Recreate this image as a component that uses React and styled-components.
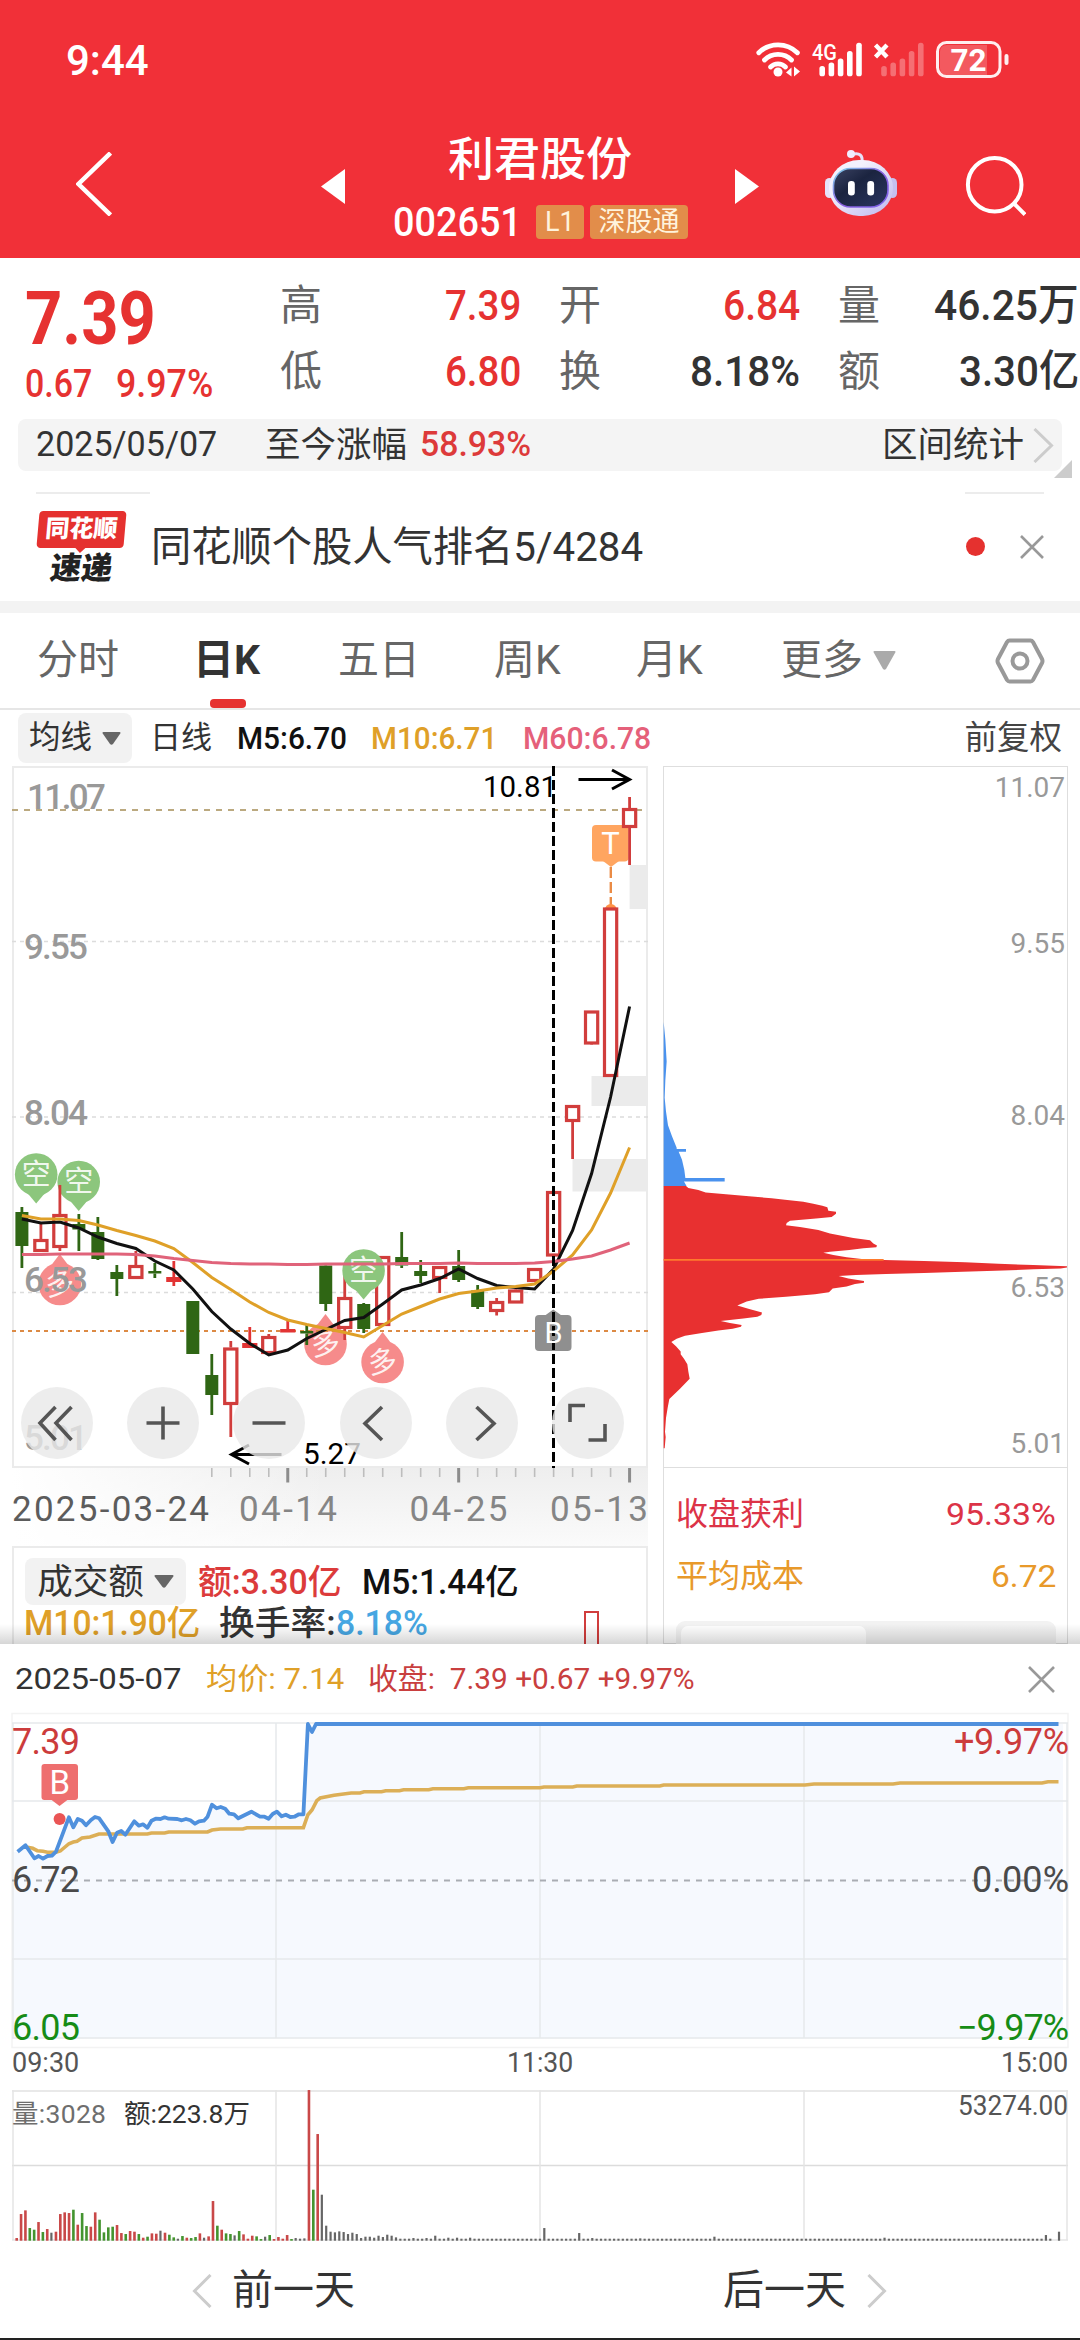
import React, { useLayoutEffect, useRef, useState } from 'react'
import styled, { createGlobalStyle } from 'styled-components'

const RED = '#e63231'
const GOLD = '#dfa028'
const FONT = "Roboto, 'Noto Sans CJK SC', sans-serif"

// squeezes a line of text to a given width, the way the DIN numerals sit in the app
const Fit = ({ w, children, ...rest }) => {
  const ref = useRef(null)
  const [scale, setScale] = useState(1)

  useLayoutEffect(() => {
    setScale(w / ref.current.offsetWidth)
  }, [w, children])

  return (
    <FitBox $w={w} {...rest}>
      <FitText ref={ref} style={{ transform: `scaleX(${scale})` }}>{children}</FitText>
    </FitBox>
  )
}

// ---------- k line data ----------

// [kind, top, bottom, high, low]  kind: g = down, r = up (hollow), f = up (filled)
const candles = [
  ['g', 1212, 1246, 1207, 1268],
  ['r', 1239, 1252, 1223, 1252],
  ['r', 1214, 1248, 1185, 1251],
  ['g', 1224, 1229.5, 1214, 1251],
  ['g', 1232, 1259, 1217, 1260],
  ['g', 1272, 1279, 1265, 1296],
  ['r', 1265, 1279, 1251, 1279],
  ['g', 1271, 1273.5, 1263, 1278],
  ['f', 1277, 1282, 1261, 1286],
  ['g', 1301, 1354, 1301, 1354],
  ['g', 1375, 1395, 1354, 1415],
  ['r', 1347.5, 1405, 1341, 1437],
  ['f', 1343, 1348, 1327, 1348],
  ['r', 1336, 1354, 1334, 1355],
  ['f', 1329, 1332.5, 1320, 1332],
  ['g', 1331, 1333.5, 1325, 1345],
  ['g', 1265.5, 1304, 1265, 1311],
  ['r', 1297, 1329, 1265, 1340],
  ['g', 1304, 1329, 1303, 1333],
  ['r', 1256, 1326, 1256, 1326],
  ['g', 1257, 1265.5, 1232, 1268],
  ['g', 1271, 1276, 1260, 1283],
  ['r', 1266, 1279, 1266, 1293],
  ['g', 1266, 1280, 1250, 1282],
  ['g', 1290.5, 1307, 1285, 1309],
  ['r', 1301, 1312, 1298, 1315.5],
  ['r', 1289.5, 1303.5, 1289, 1303],
  ['r', 1268, 1282, 1268, 1282],
  ['r', 1191, 1256.5, 1191, 1262],
  ['r', 1105, 1122, 1105, 1159],
  ['r', 1010.5, 1044.5, 1011, 1045],
  ['r', 907.5, 1077, 908, 1077],
  ['r', 808, 828, 797, 865],
]

const cx = (i) => 21.9 + i * 18.99

const ma5 = [1219, 1223, 1222, 1228, 1237, 1243.5, 1248.5, 1261, 1270, 1289, 1311.5, 1329, 1343.5, 1355, 1350, 1338.5, 1329.5, 1320.5, 1317.5, 1304, 1290, 1285, 1278.5, 1269, 1278.5, 1285.5, 1287.5, 1289, 1269, 1230.5, 1173.5, 1097, 1006.5]
const ma10 = [1215.5, 1219, 1219, 1220.5, 1225, 1230.5, 1235.5, 1241, 1248.5, 1262.5, 1277.5, 1289.5, 1302, 1312.5, 1320, 1324.5, 1328.5, 1332.5, 1337, 1325.5, 1314, 1306.5, 1299, 1293.5, 1291, 1288, 1286.5, 1284, 1271, 1255, 1230, 1193, 1147.5]
const ma60 = [1254.5, 1254.5, 1254, 1254, 1254, 1254, 1254.5, 1256, 1258.5, 1260.5, 1262.5, 1263.5, 1264, 1264, 1264.5, 1264.5, 1264, 1264, 1264, 1264, 1263.5, 1263.5, 1263.5, 1263, 1263.5, 1263.5, 1263.5, 1263, 1261.5, 1259, 1256, 1250, 1243]

const toPoints = (list) => list.map((y, i) => `${cx(i)},${y}`).join(' ')

const Candle = ({ i, data }) => {
  const [kind, top, bottom, high, low] = data
  const x = cx(i)
  const color = kind === 'g' ? '#2f6614' : kind === 'f' ? '#e23434' : '#d13d3c'
  return (
    <g stroke={color} strokeWidth="2.8">
      {high < top && <line x1={x} x2={x} y1={high} y2={top} />}
      {low > bottom && <line x1={x} x2={x} y1={bottom} y2={low} />}
      {kind === 'r'
        ? <rect x={x - 6.1} y={top + 1.5} width="12.2" height={bottom - top - 3} fill="#fff" strokeWidth="3.2" />
        : <rect x={x - (kind === 'f' ? 7.6 : 6.5)} y={top} width={kind === 'f' ? 15.2 : 13} height={bottom - top} fill={color} stroke="none" />}
    </g>
  )
}

const Bubble = ({ x, y, up }) => (
  <g>
    <g fill={up ? '#f68b8b' : '#8cc67d'}>
      <circle cx={x} cy={y} r="21.3" />
      <path d={up ? `M${x - 8} ${y - 19.6} L${x} ${y - 30} L${x + 8} ${y - 19.6}z` : `M${x - 8} ${y + 19.6} L${x} ${y + 29} L${x + 8} ${y + 19.6}z`} />
    </g>
    <text x={x} y={y + 10} fontSize="29" textAnchor="middle" fill="#fff" fillOpacity=".9" transform={up ? `rotate(-8 ${x} ${y})` : undefined}>{up ? '多' : '空'}</text>
  </g>
)

const KChart = () => (
  <KSvg viewBox="12 766 636 780">
    <defs>
      <linearGradient id="axisShade" x1="0" x2="0" y1="0" y2="1">
        <stop offset="0" stopColor="#eeeeee" />
        <stop offset="1" stopColor="#fbfbfb" />
      </linearGradient>
      <linearGradient id="axisFade" x1="0" x2="1" y1="0" y2="0">
        <stop offset="0" stopColor="#fff" />
        <stop offset=".5" stopColor="#fff" stopOpacity="0" />
      </linearGradient>
    </defs>
    <rect x="12" y="1468" width="636" height="80" fill="url(#axisShade)" />
    <rect x="12" y="1468" width="636" height="80" fill="url(#axisFade)" />
    <rect x="13" y="767" width="634" height="700" fill="#fff" stroke="#ebebeb" strokeWidth="2" />

    <g fill="#ebebeb">
      <rect x="629.6" y="865" width="18" height="44" />
      <rect x="591.5" y="1076" width="56" height="30" />
      <rect x="572.5" y="1159" width="75" height="32.5" />
    </g>

    <g stroke="#dcdcdc" strokeWidth="1.6" strokeDasharray="4 4">
      <line x1="12" x2="648" y1="941.5" y2="941.5" />
      <line x1="12" x2="648" y1="1117" y2="1117" />
      <line x1="12" x2="648" y1="1292.5" y2="1292.5" />
    </g>

    <Bubble x={59.8} y={1284} up />
    <Bubble x={325.5} y={1344} up />
    <Bubble x={382.6} y={1362} up />
    <Bubble x={36.2} y={1174.5} />
    <Bubble x={78.7} y={1182} />

    <g fill="#999" fontSize="35" fontWeight="500">
      <text x="27" y="809" textLength="79">11.07</text>
      <text x="24" y="959" textLength="64">9.55</text>
      <text x="24" y="1125" textLength="64">8.04</text>
      <text x="24" y="1292" textLength="64">6.53</text>
      <text x="24" y="1450" textLength="64">5.01</text>
    </g>
    <line x1="12" x2="642" y1="810" y2="810" stroke="#bba97f" strokeWidth="2" strokeDasharray="6 6" />
    <line x1="12" x2="648" y1="1331" y2="1331" stroke="#dc8a45" strokeWidth="2.2" strokeDasharray="4 4" />

    <rect x="592" y="825" width="36.5" height="36.5" rx="4" fill="#ffa560" />
    <path d="M603 861h16l-8 6z" fill="#ffa560" />
    <text x="610.5" y="854" fontSize="31" textAnchor="middle" fill="#fff">T</text>
    <line x1="610.8" x2="610.8" y1="867" y2="906" stroke="#ea8b45" strokeWidth="2.4" strokeDasharray="11 4" />
    <circle cx="610.8" cy="910" r="6" fill="#ff9347" />

    {candles.map((c, i) => <Candle key={i} i={i} data={c} />)}
    <Bubble x={363.6} y={1270.5} />

    <g fill="none" strokeWidth="3">
      <polyline points={toPoints(ma5)} stroke="#111" />
      <polyline points={toPoints(ma10)} stroke={GOLD} />
      <polyline points={toPoints(ma60)} stroke="#e0637a" />
    </g>

    <rect x="535" y="1315" width="36.5" height="36" rx="4" fill="#8f8f8f" />
    <path d="M545 1315.5l8.3-6 8.3 6z" fill="#8f8f8f" />
    <line x1="553.5" x2="553.5" y1="766" y2="1468" stroke="#000" strokeWidth="3" strokeDasharray="10 4" />
    <text x="553.5" y="1343" fontSize="29" textAnchor="middle" fill="#fff">B</text>

    <g fill="#000" fontSize="30">
      <text x="483" y="796.5" textLength="74" lengthAdjust="spacingAndGlyphs">10.81</text>
      <text x="303" y="1464" textLength="58" lengthAdjust="spacingAndGlyphs">5.27</text>
    </g>
    <g fill="none" stroke="#000" strokeWidth="3">
      <path d="M578.5 779.5h50M612 770l17.5 9.5-17.5 9.5" />
      <path d="M281.5 1454.5h-50M249 1445l-17.5 9.5 17.5 9.5" />
    </g>

    {candles.map((c, i) => {
      if (i < 10) return null
      const big = i === 14 || i === 23 || i === 32
      return <line key={i} x1={cx(i)} x2={cx(i)} y1="1468" y2={big ? 1482.5 : 1477} stroke={big ? '#8c8c8c' : '#bdbdbd'} strokeWidth={big ? 3 : 1.6} />
    })}
    <g fontSize="35" fill="#858585">
      <text x="12" y="1521" textLength="197" fill="#5c5c5c">2025-03-24</text>
      <text x="239" y="1521" textLength="98">04-14</text>
      <text x="409.5" y="1521" textLength="98">04-25</text>
      <text x="550" y="1521" textLength="98">05-13</text>
    </g>
  </KSvg>
)

const ChipChart = () => (
  <ChipSvg viewBox="663 766 405 701">
    <g transform="translate(640 960) scale(.33333 .34436)">
      <path
        d="M71 180 L76 230 80 295 76 350 74 400 78 440 84 480 96 512 110 545 110 549 138 549 138 557 116 557 126 580 133 610 136 633 254 633 254 643 132 643 140 657 71 657z"
        fill="#4a92ee"
      />
      <path
        d="M71 656 L138 656 145 662 175 668 197 675 258 680 327 686 395 692 435 696 490 702 520 708 547 714 562 718 565 728 588 731 588 737 575 746 528 751 450 757 440 764 438 770 480 775 535 784 570 794 605 801 640 807 690 814 700 823 711 829 709 834 670 837 628 842 570 847 550 850 580 857 620 863 665 868 731 871 852 874 975 878 1075 882 1180 886 1281 889 1281 893 1262 896 1180 898 1090 902 968 905 852 909 738 912 648 915 596 918 625 925 672 932 672 937 645 941 620 948 578 954 567 965 525 971 438 978 356 984 320 992 292 1003 325 1013 366 1024 364 1031 352 1036 310 1041 242 1048 270 1054 305 1060 303 1065 278 1071 235 1076 186 1083 135 1091 110 1100 94 1109 108 1122 122 1137 122 1145 132 1158 142 1174 145 1195 149 1216 120 1245 88 1275 83 1300 78 1330 75 1370 77 1385 74 1418 71 1418z"
        fill="#e83030"
      />
      <line x1="71" x2="731" y1="871" y2="871" stroke="#ff7a2c" strokeWidth="5" />
    </g>
    <g fill="#999" fontSize="28" textAnchor="end">
      <text x="1065" y="797">11.07</text>
      <text x="1065" y="953">9.55</text>
      <text x="1065" y="1125">8.04</text>
      <text x="1065" y="1297">6.53</text>
      <text x="1065" y="1453">5.01</text>
    </g>
  </ChipSvg>
)

// ---------- one day data ----------

const price = '17.6,1851.7 25.5,1845.3 34.4,1858.3 38.6,1856 43,1858.7 47.5,1856 52,1855.7 56,1851.7 68.9,1817.3 73.3,1827.3 77.8,1819 82,1820.7 86,1825.3 91,1820 95,1817 99.2,1818.3 108.5,1831.7 112.6,1842 117,1832.7 121.2,1831 125.3,1834.7 134.3,1821.3 138.8,1825.7 143,1824.3 147.4,1827.7 151.5,1820.7 155.7,1818.7 160.5,1819 164.6,1817.3 168.7,1818.7 177.3,1819 181.8,1820.3 186,1819 190.4,1820.3 195,1823.7 199,1821.3 203.9,1820.7 207.6,1816.7 212,1804.7 216.6,1808.3 220.7,1807 225.2,1808.7 229.3,1813.7 234,1814.3 238.3,1818.3 251.4,1811.7 260,1816.7 264.5,1816.7 268.6,1818.7 272.7,1814 276.9,1811.7 281.7,1816.3 285.8,1814.7 290.3,1817 294.4,1816.7 298.9,1814.3 303.4,1814.3 307.9,1724 312,1732 316,1724 1058.5,1724'
const average = '27.5,1847.3 32.7,1848.3 37.2,1850.7 43,1851.3 47.5,1852.3 56,1852.3 60.3,1851 68.9,1843.7 73.3,1842 77,1841.3 82,1838 90,1837 99,1834 147.4,1834 151.5,1833 164.6,1833 168.7,1832 207.6,1832 212,1830 220.4,1829 242.8,1829 247,1827.7 303.4,1827.7 307.9,1814.7 312,1810 316.8,1800.7 320.2,1798 334,1795.3 351.2,1793 360,1793 364,1791.7 381.5,1791.7 385.7,1790.7 399.5,1790.7 403.6,1789.7 428.7,1789.7 432.9,1788.7 463.8,1788.7 468.3,1787.7 540,1787.7 544,1787 572.7,1787 576.8,1786 659.8,1786 663.6,1785 805,1785 814,1784 893,1784 900,1783 1042,1783 1048,1781.7 1058.5,1781.7'

const volumes = (
  'r8 r80 r91 g38 g33 r56 g26 r35 k24 r27 r80 r85 r83 g93 r48 g83 g44 r42 r85 g63 g25 g40 g42 r47 r23 g20 r29 r27 g20 r9 ' +
  'g12 r22 r21 k30 r24 g18 g10 k6 g14 r9 g8 g11 r22 k9 r13 r119 g45 r33 g22 g20 k16 g29 r19 r6 r15 g13 g5 k12 g17 r5 ' +
  'r11 r6 r17 g5 k8 k6 k7 r452 g153 r320 k138 k45 k27 k25 k28 k26 k20 k24 k20 k8 k12 k12 k9 k15 k11 k18 k15 k10'
).split(' ').map((s) => [s[0], Number(s.slice(1))])
const spikes = { 91: 8, 94: 8, 96: 15, 99: 9, 101: 9, 104: 9, 121: 38, 129: 23, 132: 8, 143: 7, 160: 12, 199: 9, 236: 17, 238: 0, 239: 27 }
for (let i = volumes.length; i < 240; i++) volumes.push(['k', spikes[i] ?? 6])
const barColor = { r: '#c94848', g: '#44942f', k: '#666' }

const DayChart = () => (
  <DaySvg viewBox="0 1712 1080 338">
    <rect x="12" y="1713.5" width="1056" height="334" fill="none" stroke="#f3f3f3" strokeWidth="1.5" />
    <polygon points={`13,2038 13,1852 ${price} 1063,1724 1063,2038`} fill="#f6f9fe" />
    <g stroke="#e6e8eb" strokeWidth="1.5">
      <line x1="12" x2="1068" y1="1723" y2="1723" />
      <line x1="12" x2="1068" y1="1801" y2="1801" />
      <line x1="12" x2="1068" y1="1959" y2="1959" />
      <line x1="12" x2="1068" y1="2038" y2="2038" />
      <line x1="13" x2="13" y1="1723" y2="2038" />
      <line x1="276" x2="276" y1="1723" y2="2038" />
      <line x1="540" x2="540" y1="1723" y2="2038" />
      <line x1="804" x2="804" y1="1723" y2="2038" />
      <line x1="1067" x2="1067" y1="1723" y2="2038" />
    </g>
    <line x1="12" x2="1063" y1="1880.5" y2="1880.5" stroke="#a9adb3" strokeWidth="2" strokeDasharray="6 6" />
    <polyline points={average} fill="none" stroke="#dcaf57" strokeWidth="3.6" />
    <polyline points={price} fill="none" stroke="#4f90dd" strokeWidth="3.8" strokeLinejoin="round" />
    <g fontSize="36">
      <text x="12" y="1754" textLength="68" fill="#cc3c3c">7.39</text>
      <text x="12" y="1892" textLength="68" fill="#4a4a4a">6.72</text>
      <text x="12" y="2040" textLength="68" fill="#168c16">6.05</text>
      <g textAnchor="end">
        <text x="1069" y="1754" textLength="115" fill="#cc3c3c">+9.97%</text>
        <text x="1069" y="1892" textLength="97" fill="#4a4a4a">0.00%</text>
        <text x="1069" y="2040" textLength="112" fill="#168c16">−9.97%</text>
      </g>
    </g>
    <rect x="41.5" y="1764" width="36.5" height="36" rx="3" fill="#ee6f6f" />
    <path d="M51 1799.5h17l-8.5 6.5z" fill="#ee6f6f" />
    <text x="59.8" y="1793.5" fontSize="33" textAnchor="middle" fill="#fff">B</text>
    <circle cx="59.6" cy="1819" r="6" fill="#ea5555" />
  </DaySvg>
)

const VolumeChart = () => (
  <VolumeSvg viewBox="0 2076 1080 170">
    <g stroke="#e4e4e4" strokeWidth="1.5" fill="none">
      <line x1="12" x2="1068" y1="2091" y2="2091" stroke="#e9e9e9" strokeWidth="2" />
      <line x1="12" x2="1068" y1="2165.5" y2="2165.5" stroke="#dcdcdc" />
      <line x1="12" x2="1068" y1="2240" y2="2240" />
      <line x1="13" x2="13" y1="2090" y2="2240" />
      <line x1="276" x2="276" y1="2090" y2="2240" />
      <line x1="540" x2="540" y1="2090" y2="2240" />
      <line x1="804" x2="804" y1="2090" y2="2240" />
      <line x1="1067" x2="1067" y1="2090" y2="2240" />
    </g>
    {volumes.map(([k, h], i) => (
      <rect key={i} x={15.4 + i * 4.362} y={2240.7 - h / 3} width={k === 'k' ? 2.2 : 2.6} height={h / 3} fill={barColor[k]} />
    ))}
    <g fontSize="26.5">
      <text x="12" y="2123" textLength="94" fill="#6e6e6e">量:3028</text>
      <text x="124" y="2123" textLength="126" fill="#333">额:223.8万</text>
      <text x="958" y="2115" textLength="110" fill="#555" fontSize="28" lengthAdjust="spacingAndGlyphs">53274.00</text>
    </g>
  </VolumeSvg>
)

// ---------- icons ----------

const signal = [[819.4, 66], [828.6, 62.5], [837.8, 58.5], [847, 51], [856.2, 42.7]]

const StatusIcons = () => (
  <svg width="256" height="40" viewBox="754 40 256 40" fill="none">
    <g stroke="#fff" strokeWidth="4.8" strokeLinecap="round">
      <path d="M758.8 52.7a27.500 27.500 0 0 1 38.600 0" />
      <path d="M764.500 60a19 19 0 0 1 27 0" />
      <path d="M770.500 67a10.500 10.500 0 0 1 15 0" />
    </g>
    <circle cx="778" cy="72" r="4.500" fill="#fff" />
    <path d="M786 72.500l5.500-5v9zM800 71.500l-6-5v10z" fill="#fff" />
    <text x="812" y="60" fontSize="22.500" fontWeight="500" fill="#fff" textLength="25" lengthAdjust="spacingAndGlyphs">4G</text>
    <g fill="#fff">
      {signal.map(([x, y]) => <rect key={x} x={x} y={y} width="5.600" height={76.300 - y} rx="2.600" />)}
    </g>
    <g fill="#fff" opacity=".3" transform="translate(61.800 0)">
      {signal.map(([x, y]) => <rect key={x} x={x} y={y} width="5.600" height={76.300 - y} rx="2.600" />)}
    </g>
    <path d="M875.500 45l11.500 12M887 45l-11.500 12" stroke="#fff" strokeWidth="4.400" />
    <path d="M947 45h40v30h-40q-7 0-7-7v-16q0-7 7-7z" fill="#fff" opacity=".2" />
    <rect x="937.500" y="42.500" width="62.500" height="34" rx="9" stroke="#fff" strokeOpacity=".92" strokeWidth="3" />
    <rect x="1004.500" y="54" width="4" height="11" rx="2" fill="#fff" fillOpacity=".92" />
    <text x="968.500" y="71" fontSize="31.500" fontWeight="700" fill="#fff" textAnchor="middle">72</text>
  </svg>
)

const Robot = () => (
  <svg width="72" height="68" viewBox="825 149 72 68">
    <defs>
      <linearGradient id="shell" x1="0" x2="1" y1="0" y2="1">
        <stop offset=".3" stopColor="#f3f1fd" />
        <stop offset="1" stopColor="#bdb6ee" />
      </linearGradient>
      <linearGradient id="visor" x1="0" x2="1" y1="0" y2="1">
        <stop offset="0" stopColor="#3b4363" />
        <stop offset=".4" stopColor="#1b2440" />
        <stop offset="1" stopColor="#2b3660" />
      </linearGradient>
      <linearGradient id="rim" x1="0" x2="1" y1="0" y2="1">
        <stop offset="0" stopColor="#7fd6ea" />
        <stop offset=".5" stopColor="#8a5fe0" />
        <stop offset="1" stopColor="#7d62e8" />
      </linearGradient>
    </defs>
    <path d="M862 162c1-7-3-9-8-8" stroke="#e6e2fa" strokeWidth="3" fill="none" />
    <circle cx="851" cy="154" r="4" fill="#f1edff" />
    <rect x="825" y="178" width="9" height="20" rx="4.500" fill="#e6e2fa" />
    <rect x="888" y="178" width="9" height="20" rx="4.500" fill="#c5bff0" />
    <rect x="829" y="160" width="64" height="56" rx="30" fill="url(#shell)" />
    <rect x="833.500" y="168.500" width="54.500" height="38.500" rx="17" fill="url(#visor)" stroke="url(#rim)" strokeWidth="1.600" />
    <rect x="848" y="181" width="6.800" height="14.500" rx="3.200" fill="#fff" />
    <rect x="867.300" y="181" width="6.800" height="14.500" rx="3.200" fill="#fff" />
  </svg>
)

const Chevron = ({ left, w = 20, h = 34, color = '#ccc', sw = 3 }) => (
  <svg width={w} height={h} fill="none" stroke={color} strokeWidth={sw}>
    <path d={left ? `M${w - 1.5} 1 L2.5 ${h / 2} L${w - 1.5} ${h - 1}` : `M1.5 1 L${w - 2.5} ${h / 2} L1.5 ${h - 1}`} />
  </svg>
)

const Cross = ({ size, sw = 2.6 }) => (
  <svg width={size} height={size} stroke="#999" strokeWidth={sw}>
    <path d={`M1 1L${size - 1} ${size - 1}M${size - 1} 1L1 ${size - 1}`} />
  </svg>
)

const Down = ({ w, h, color = '#666' }) => (
  <svg width={w} height={h}>
    <path d={`M1.5 0h${w - 3}q1.5 0 .8 1.5L${w / 2 + 1.5} ${h - 1}q-1.5 1.5-3 0L.7 1.5Q0 0 1.5 0z`} fill={color} />
  </svg>
)

const toolIcons = [
  'M34.5 20L19 36l15.5 17M50.5 20L35 36l15.5 17',
  'M19.5 36h33M36 19.5v33',
  'M19.5 36h33',
  'M42 20L25 36.5 42 53',
  'M30.5 20l17.5 16.5L30.5 53',
  'M33 18.5H18v16.5M36.5 53H53V37',
]

const quotes = [
  ['高', '7.39', 76, RED],
  ['开', '6.84', 77, RED],
  ['量', '46.25万', 145, '#333'],
  ['低', '6.80', 76, RED],
  ['换', '8.18%', 110, '#333'],
  ['额', '3.30亿', 120, '#333'],
]

const App = () => {
  return (
    <Page>
      <Global />
      <Header>
        <Status>
          <Fit w={83}>9:44</Fit>
          <StatusIcons />
        </Status>
        <Nav>
          <Back>
            <Chevron left w={36} h={64} color="#fff" sw={4.5} />
          </Back>
          <svg width="24" height="35"><path d="M24 0v35L0 17.5z" fill="#fff" /></svg>
          <Title>
            <Name>利君股份</Name>
            <Code>
              <Fit w={129}>002651</Fit>
              <Badge $w={48} $ml={14}><Fit w={30}>L1</Fit></Badge>
              <Badge $w={98} $ml={6}>深股通</Badge>
            </Code>
          </Title>
          <svg width="24" height="35"><path d="M0 0v35l24-17.5z" fill="#fff" /></svg>
          <RobotBox><Robot /></RobotBox>
          <svg width="62" height="62" fill="none" stroke="#fff" strokeWidth="4">
            <circle cx="30.7" cy="29.7" r="26.8" />
            <path d="M50 48.500l11 11" />
          </svg>
        </Nav>
      </Header>

      <Quote>
        <Now>
          <Big><Fit w={131}>7.39</Fit></Big>
          <Change>
            <Fit w={67}>0.67</Fit>
            <Fit w={97}>9.97%</Fit>
          </Change>
        </Now>
        <Metrics>
          {quotes.map(([label, value, w, color]) => (
            <Metric key={label} $color={color}>
              <span>{label}</span>
              <Fit w={w}>{value}</Fit>
            </Metric>
          ))}
        </Metrics>
      </Quote>

      <Strip>
        <Fit w={181}>2025/05/07</Fit>
        <StripLabel>至今涨幅</StripLabel>
        <StripRate><Fit w={111}>58.93%</Fit></StripRate>
        <StripLink>区间统计</StripLink>
        <Chevron w={21} h={35} color="#ccc" />
        <Corner />
      </Strip>

      <News>
        <Rules><i /><i /></Rules>
        <Logo>
          <LogoTop>同花顺</LogoTop>
          <LogoBottom>速递</LogoBottom>
        </Logo>
        <NewsText><Fit w={492}>同花顺个股人气排名5/4284</Fit></NewsText>
        <Dot />
        <Cross size={24} />
      </News>

      <Tabs>
        <Tab $w={156}>分时</Tab>
        <Tab $w={145} $on>日K</Tab>
        <Tab $w={156}>五日</Tab>
        <Tab $w={142}>周K</Tab>
        <Tab $w={145}>月K</Tab>
        <Tab $w={214}>更多<Down w={23} h={19} color="#aaa" /></Tab>
        <svg width="50" height="46" viewBox="0 0 50 46" fill="none" stroke="#999" strokeWidth="4">
          <path d="M14.5 2.500h21q1.500 0 2.500 1.500l9 17q1 2 0 4l-9 17q-1 1.500-2.500 1.500h-21q-1.500 0-2.500-1.500l-9-17q-1-2 0-4l9-17q1-1.500 2.500-1.500z" />
          <circle cx="25" cy="23" r="7.5" />
        </svg>
      </Tabs>

      <MaBar>
        <Pill $w={114} $h={50} $size={31.5}>均线<Down w={19} h={13} /></Pill>
        <MaItem $ml={18}>日线</MaItem>
        <MaItem $ml={25} $color="#111" $strong><Fit w={110}>M5:6.70</Fit></MaItem>
        <MaItem $ml={24} $color={GOLD} $strong><Fit w={126}>M10:6.71</Fit></MaItem>
        <MaItem $ml={26} $color="#e5607a" $strong><Fit w={128}>M60:6.78</Fit></MaItem>
        <Adjust>前复权</Adjust>
      </MaBar>

      <Charts>
        <Left>
          <KChart />
          <Tools>
            {toolIcons.map((d) => (
              <Tool key={d}>
                <svg width="72" height="72" fill="none" stroke="#555" strokeWidth="3.6"><path d={d} /></svg>
              </Tool>
            ))}
          </Tools>
          <Turnover>
            <TurnoverRow>
              <Pill $w={161} $h={47} $size={35.5}>成交额<Down w={20} h={13} /></Pill>
              <Figure $ml={12} $color="#dc3b3b"><Fit w={144}>额:3.30亿</Fit></Figure>
              <Figure $ml={20} $color="#111"><Fit w={157}>M5:1.44亿</Fit></Figure>
            </TurnoverRow>
            <TurnoverRow $second>
              <Figure $ml={-1} $color={GOLD}><Fit w={176}>M10:1.90亿</Fit></Figure>
              <Figure $ml={19} $color="#333"><Fit w={117}>换手率:</Fit></Figure>
              <Figure $color="#46a6e2"><Fit w={92}>8.18%</Fit></Figure>
              <TurnoverBar />
            </TurnoverRow>
          </Turnover>
        </Left>
        <Right>
          <ChipChart />
          <ChipRow $color="#dc3347"><span>收盘获利</span><Fit w={110}>95.33%</Fit></ChipRow>
          <ChipRow $color="#e8992a"><span>平均成本</span><Fit w={65}>6.72</Fit></ChipRow>
          <Segment>
            <SegmentOn />
          </Segment>
        </Right>
        <Shade />
      </Charts>

      <Sheet>
        <SheetHead>
          <Fit w={166}>2025-05-07</Fit>
          <HeadItem $ml={25} $color={GOLD}><Fit w={138}>均价: 7.14</Fit></HeadItem>
          <HeadItem $ml={24} $color="#c93f3f"><Fit w={327}>收盘:&nbsp; 7.39 +0.67 +9.97%</Fit></HeadItem>
          <Close><Cross size={27} /></Close>
        </SheetHead>
        <DayChart />
        <Times>
          <Fit w={67}>09:30</Fit>
          <Fit w={66}>11:30</Fit>
          <Fit w={67}>15:00</Fit>
        </Times>
        <VolumeChart />
        <Pager>
          <Chevron left w={20} h={34} />
          <PagerText $ml={20} $mr={368}>前一天</PagerText>
          <PagerText $mr={21}>后一天</PagerText>
          <Chevron w={20} h={34} />
        </Pager>
      </Sheet>
    </Page>
  )
}

export default App

const Global = createGlobalStyle`
body {
  margin: 0;
  background: #fff;
}
* {
  box-sizing: border-box;
}
svg {
  display: block;
  flex: none;
}
svg text {
  font-family: ${FONT};
}
`

const Page = styled.div`
width: 1080px;
height: 2340px;
overflow: hidden;
background: #fff;
font-family: ${FONT};
line-height: 1.2;
color: #333;
`

const FitBox = styled.span`
display: block;
flex: none;
width: ${(p) => p.$w}px;
white-space: nowrap;
`

const FitText = styled.span`
display: inline-block;
transform-origin: 0 50%;
`

const Header = styled.div`
height: 258px;
background: #f13038;
color: #fff;
`

const Status = styled.div`
display: flex;
justify-content: space-between;
align-items: center;
height: 120px;
padding: 0 70px 0 66px;
font-size: 43px;
font-weight: 500;
line-height: 50px;
`

const Nav = styled.div`
display: flex;
align-items: center;
height: 132px;
`

const Back = styled.div`
width: 321px;
padding: 0 0 5px 76px;
`

const Title = styled.div`
width: 390px;
height: 132px;
padding-top: 11px;
`

const Name = styled.div`
font-size: 46px;
line-height: 56px;
font-weight: 500;
text-align: center;
`

const Code = styled.div`
display: flex;
align-items: center;
height: 34px;
margin-top: 18px;
padding-left: 48px;
font-size: 41px;
font-weight: 500;
line-height: 34px;
`

const Badge = styled.div`
display: flex;
justify-content: center;
width: ${(p) => p.$w}px;
height: 34px;
margin-left: ${(p) => p.$ml}px;
border-radius: 4px;
background: #e28d4a;
color: #fff3dc;
font-size: 27px;
font-weight: 400;
`

const RobotBox = styled.div`
margin: 0 67px 6px 66px;
`

const Quote = styled.div`
display: flex;
height: 161px;
padding-top: 15px;
`

const Now = styled.div`
width: 281px;
padding: 10px 0 0 25px;
color: ${RED};
`

const Big = styled.div`
font-size: 74px;
font-weight: 700;
line-height: 72px;
`

const Change = styled.div`
display: flex;
gap: 24px;
margin-top: 4px;
font-size: 38px;
font-weight: 500;
line-height: 50px;
`

const Metrics = styled.div`
display: grid;
grid-template-columns: repeat(3, 240px);
grid-auto-rows: 66px;
column-gap: 39px;
`

const Metric = styled.div`
display: flex;
justify-content: space-between;
align-items: center;
font-size: 43px;
font-weight: 500;
color: ${(p) => p.$color};

> span:first-child {
  margin-left: -1px;
  font-size: 42px;
  font-weight: 400;
  color: #666;
}
`

const Strip = styled.div`
position: relative;
display: flex;
align-items: center;
height: 52px;
margin: 0 18px;
padding: 0 8px 0 18px;
border-radius: 8px;
background: #f4f4f4;
font-size: 35px;
line-height: 50px;
`

const StripLabel = styled.div`
margin-left: 48px;
font-size: 35.5px;
`

const StripRate = styled.div`
margin-left: 13px;
font-weight: 500;
color: #dd3a3a;
`

const StripLink = styled.div`
margin: 0 9px 0 auto;
font-size: 35.5px;
`

const Corner = styled.div`
position: absolute;
right: -10px;
bottom: -7px;
border-left: 18px solid transparent;
border-bottom: 18px solid #ccc;
`

const News = styled.div`
display: grid;
grid-template-columns: 112px 816px 54px 30px;
grid-template-rows: 34px 1fr;
align-items: center;
height: 130px;
padding-left: 38px;
`

const Rules = styled.div`
grid-column: 1 / -1;
display: flex;
justify-content: space-between;
align-self: start;
padding: 21px 6px 0 0;
margin-left: -2px;

i {
  width: 114px;
  height: 2px;
  background: #ececec;
}
i:last-child {
  width: 79px;
}
`

const Logo = styled.div`
align-self: start;
width: 87px;
padding-top: 6px;
text-align: center;
font-weight: 900;
`

const LogoTop = styled.div`
height: 37px;
border-radius: 4px;
background: #e5312f;
color: #fff;
font-size: 24px;
line-height: 37px;
transform: skewX(-5deg);

&::after {
  content: '';
  display: block;
  width: 0;
  margin: -1px auto 0;
  border: 6px solid transparent;
  border-top-color: #e5312f;
}
`

const LogoBottom = styled.div`
margin-top: 3px;
color: #222;
font-size: 31px;
line-height: 35px;
transform: skewX(-8deg);
`

const NewsText = styled.div`
margin: 0 0 13px 1px;
font-size: 41px;
line-height: 50px;
`

const Dot = styled.div`
width: 19px;
height: 19px;
margin-bottom: 13px;
border-radius: 50%;
background: #e5312f;

& + svg {
  margin: 0 0 13px;
}
`

const Tabs = styled.div`
display: flex;
align-items: center;
height: 109px;
padding-left: 37px;
border-top: 12px solid #f3f3f3;
border-bottom: 2px solid #e6e6e6;
`

const Tab = styled.div`
position: relative;
display: flex;
align-items: center;
gap: 10px;
width: ${(p) => p.$w}px;
height: 95px;
font-size: 41px;
font-weight: ${(p) => (p.$on ? 700 : 400)};
color: ${(p) => (p.$on ? '#333' : '#666')};

&::after {
  content: '';
  display: ${(p) => (p.$on ? 'block' : 'none')};
  position: absolute;
  left: 17px;
  bottom: 0;
  width: 36px;
  height: 9px;
  border-radius: 4px;
  background: ${RED};
}
`

const MaBar = styled.div`
display: flex;
align-items: center;
height: 56px;
padding: 0 18px;
line-height: 46px;
`

const Pill = styled.div`
display: flex;
align-items: center;
justify-content: center;
gap: 10px;
width: ${(p) => p.$w}px;
height: ${(p) => p.$h}px;
border-radius: 8px;
background: #f2f2f2;
font-size: ${(p) => p.$size}px;
`

const MaItem = styled.div`
margin-left: ${(p) => p.$ml}px;
font-size: ${(p) => (p.$strong ? 32 : 31)}px;
font-weight: ${(p) => (p.$strong ? 500 : 400)};
color: ${(p) => p.$color || '#333'};
`

const Adjust = styled.div`
margin-left: auto;
font-size: 32.5px;
color: #444;
`

const Charts = styled.div`
position: relative;
display: flex;
gap: 15px;
height: 878px;
padding-left: 12px;
overflow: hidden;
`

const Left = styled.div`
position: relative;
width: 636px;
`

const KSvg = styled.svg`
width: 636px;
height: 780px;
`

const Tools = styled.div`
position: absolute;
top: 621px;
left: 9px;
display: flex;
gap: 34.2px;
`

const Tool = styled.div`
width: 72px;
height: 72px;
border-radius: 50%;
background: rgba(232, 232, 232, 0.8);
`

const Turnover = styled.div`
height: 120px;
padding: 10px 11px;
border: 2px solid #ebebeb;
border-bottom: 0;
background: #fff;
`

const TurnoverRow = styled.div`
display: flex;
align-items: center;
height: ${(p) => (p.$second ? 36 : 47)}px;
line-height: 44px;
`

const Figure = styled.div`
margin-left: ${(p) => p.$ml || 0}px;
font-size: 34.5px;
font-weight: 500;
color: ${(p) => p.$color};
`

const TurnoverBar = styled.div`
align-self: flex-start;
width: 15px;
height: 60px;
margin: 6px 0 0 156px;
border: 2.5px solid #d13d3c;
`

const Right = styled.div`
width: 405px;
border: 1.5px solid #dedede;
`

const ChipSvg = styled.svg`
box-sizing: content-box;
width: 405px;
height: 701px;
margin: -1px 0 0 -1px;
border-bottom: 1.5px solid #dedede;
`

const ChipRow = styled.div`
display: flex;
justify-content: space-between;
align-items: center;
height: 62px;
padding: 0 11px 0 12px;
font-size: 32px;
color: ${(p) => p.$color};

${ChipSvg} + & {
  margin-top: 15px;
}
`

const Segment = styled.div`
height: 60px;
margin: 14px 11px 0 12px;
padding: 5px;
border-radius: 9px;
background: #f2f2f2;
`

const SegmentOn = styled.div`
width: 185px;
height: 50px;
border-radius: 7px;
background: #fff;
`

const Shade = styled.div`
position: absolute;
left: 0;
right: 0;
bottom: 0;
height: 20px;
background: linear-gradient(rgba(0, 0, 0, 0), rgba(0, 0, 0, 0.16));
`

const Sheet = styled.div`
height: 696px;
background: #fff;
border-bottom: 2px solid #222;
`

const SheetHead = styled.div`
display: flex;
align-items: center;
height: 68px;
padding: 2px 25px 0 15px;
font-size: 30px;
`

const HeadItem = styled.div`
margin-left: ${(p) => p.$ml}px;
color: ${(p) => p.$color};
`

const Close = styled.div`
margin-left: auto;
`

const DaySvg = styled.svg`
width: 1080px;
height: 338px;
`

const Times = styled.div`
display: flex;
justify-content: space-between;
height: 26px;
padding: 0 12px;
font-size: 27px;
line-height: 26px;
color: #555;
`

const VolumeSvg = styled.svg`
width: 1080px;
height: 170px;
`

const Pager = styled.div`
display: flex;
align-items: center;
height: 90px;
padding-left: 192px;
`

const PagerText = styled.div`
margin: 0 ${(p) => p.$mr || 0}px 0 ${(p) => p.$ml || 0}px;
font-size: 41px;
`
